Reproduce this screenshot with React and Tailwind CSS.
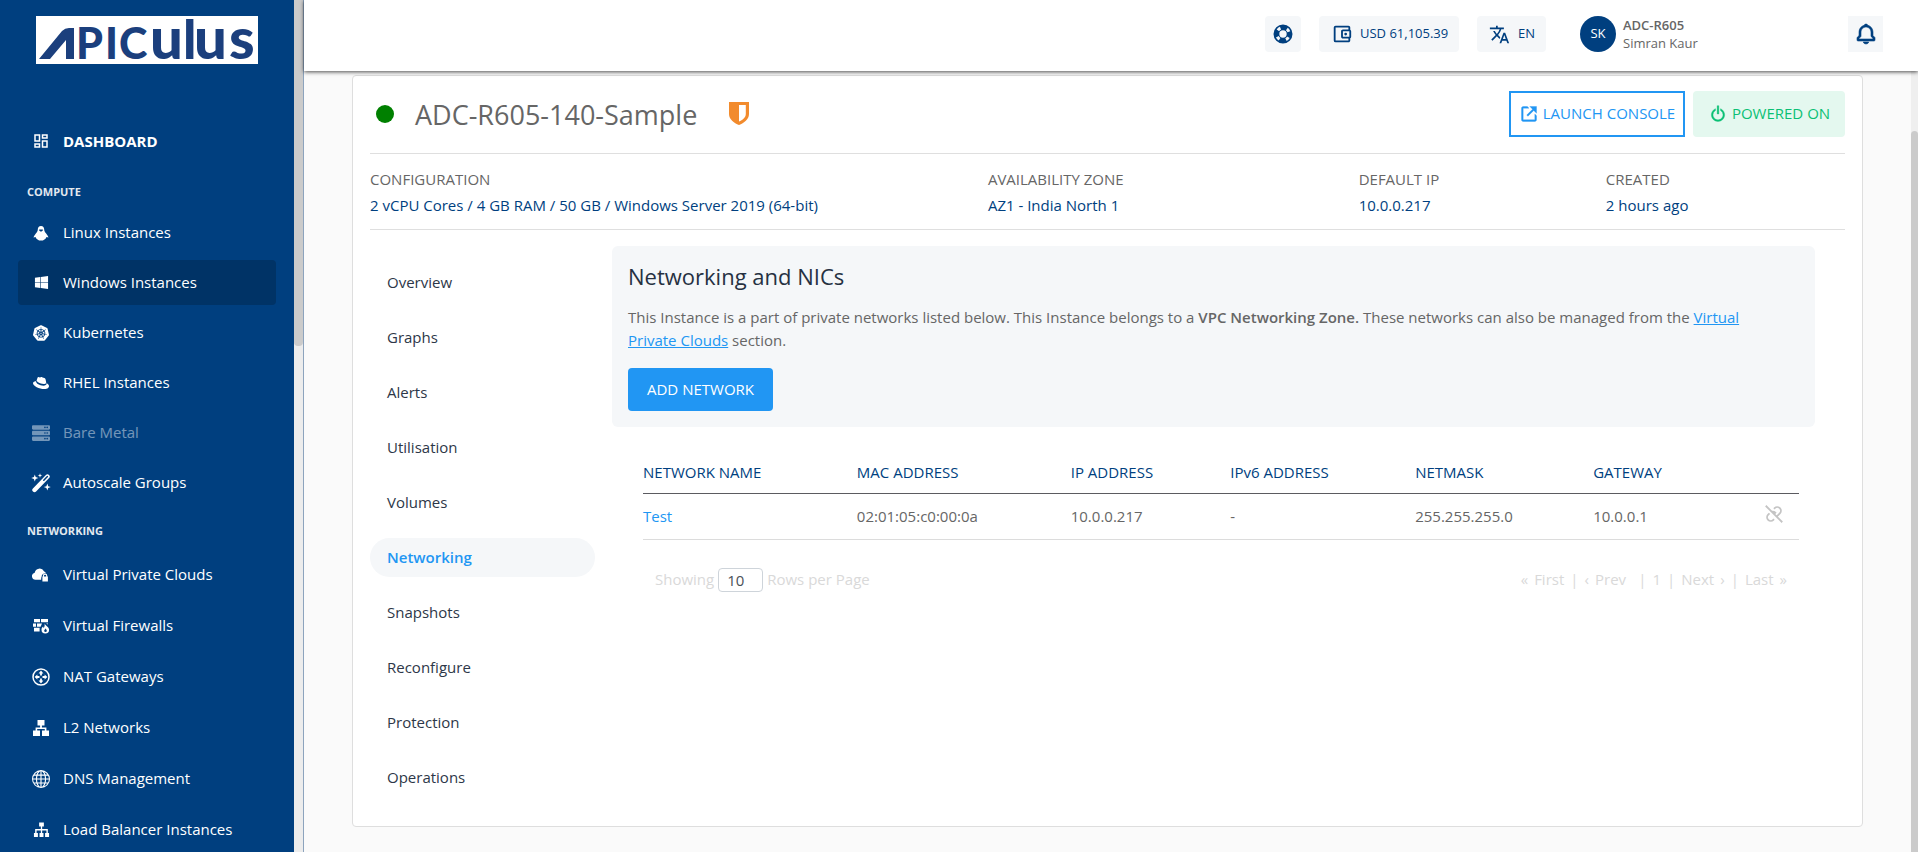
import { MdOutlineDashboard, MdTranslate, MdOutlineAccountBalanceWallet } from "react-icons/md";
import { FaRedhat, FaServer, FaWindows } from "react-icons/fa";
import { SiKubernetes } from "react-icons/si";
import { BsGlobe } from "react-icons/bs";
import { BiBell, BiLinkExternal, BiPowerOff, BiUnlink } from "react-icons/bi";

function Logo() {
  return (
    <svg viewBox="0 0 222 48" className="block h-12 w-[222px] overflow-visible bg-white" role="img" aria-label="Apiculus">
      <path d="M3 43 L26 15 Q29 12 33 12 H38 V43 H30 V24 L14 43 Z" fill="#1b3f7d" />
      <g fill="#1b3f7d" fontFamily="Lato, sans-serif">
        <text y="43" fontSize="43" fontWeight="900">
          <tspan x="40">P</tspan>
          <tspan x="69">I</tspan>
          <tspan x="83">C</tspan>
        </text>
        <text y="43" fontSize="58" fontWeight="900">
          <tspan x="114">u</tspan>
          <tspan x="158">u</tspan>
          <tspan x="193">s</tspan>
        </text>
        <text x="147" y="43" fontSize="53" fontWeight="900">l</text>
      </g>
    </svg>
  );
}

function LifebuoyIcon() {
  return (
    <svg viewBox="0 0 20 20" width="20" height="20" aria-hidden="true">
      <circle cx="10" cy="10" r="6.600" fill="none" stroke="currentColor" strokeWidth="5.800" />
      <circle
        cx="10"
        cy="10"
        r="6.300"
        fill="none"
        stroke="#f5f7f9"
        strokeWidth="3"
        strokeDasharray="3.200 6.696"
        strokeDashoffset="-3.348"
      />
    </svg>
  );
}

function PenguinIcon() {
  return (
    <svg viewBox="0 0 18 18" width="16" height="18" fill="currentColor" aria-hidden="true">
      <path fillRule="evenodd" d="M9 1C6.600 1 5.400 2.700 5.400 5c0 1.800-.9 2.800-2 4.300C2 11.200 1 12.500.6 14l2.200-.6C3.600 15.800 6 17.500 9 17.500s5.400-1.700 6.200-4.100l2.200.6c-.4-1.500-1.400-2.800-2.800-4.700-1.100-1.500-2-2.500-2-4.300 0-2.300-1.200-4-3.600-4ZM6.900 5.200h4.200v1L9 7.600 6.900 6.200Z" />
    </svg>
  );
}

function WandIcon() {
  return (
    <svg viewBox="0 0 20 20" width="20" height="20" fill="currentColor" aria-hidden="true" className="shrink-0">
      <path d="M3.500 17 16.500 3.500" stroke="currentColor" strokeWidth="4.400" strokeLinecap="round" />
      <path d="M12.800 7.300 16.400 3.600" stroke="#003f7f" strokeWidth="1.500" strokeLinecap="round" />
      <path d="M3.800 1.500l.9 2.600 2.600.9-2.600.9-.9 2.600-.9-2.600L.3 5l2.600-.9ZM9 .2l.6 1.700 1.700.6-1.700.6L9 4.800l-.6-1.700-1.700-.6 1.700-.6ZM16.300 10.600l.9 2.600 2.600.9-2.600.9-.9 2.600-.9-2.600-2.600-.9 2.600-.9Z" />
    </svg>
  );
}

function CloudLockIcon() {
  return (
    <svg viewBox="0 0 18 18" width="18" height="18" fill="currentColor" aria-hidden="true">
      <path d="M9.200 13.800H3.600A3.600 3.600 0 0 1 2.700 6.700 5 5 0 0 1 12 5.200c.6.600 1.600 1 2.200 2.200-2.500-.4-4.600 1-4.600 3.400-.4.700-.5 1.600-.4 3Z" />
      <path fillRule="evenodd" d="M10.400 10.600h.5V9.800a2.200 2.200 0 0 1 4.400 0v.8h.6v4.900h-5.500Zm1.600 0h2.200v-.8a1.100 1.100 0 0 0-2.200 0Z" />
    </svg>
  );
}

function FirewallIcon() {
  return (
    <svg viewBox="0 0 18 18" width="18" height="18" fill="currentColor" aria-hidden="true">
      <path d="M2 2h6v3.300H2ZM9 2h7v3.300H9ZM1 6.400h3v3.300H1ZM5 6.400h5L8.600 9.700H5ZM2 10.800h5.600v3.700H2ZM14 6.400h2v1.200Z" />
      <path fillRule="evenodd" d="M12.600 6.200c.2 2 4.500 3.600 4.500 6.600a3.800 3.800 0 0 1-7.600 0c0-1.600.8-2.600 1.700-3.200 0 .8.200 1.200.6 1.500.8-1.300 1-3 .8-4.900Zm.8 5c.2 1-1.200 1.500-1.200 2.500a1.300 1.300 0 0 0 2.600 0c0-1-.8-1.500-1.400-2.500Z" />
    </svg>
  );
}

function NatIcon() {
  return (
    <svg viewBox="0 0 18 18" width="18" height="18" fill="currentColor" aria-hidden="true">
      <circle cx="9" cy="9" r="8" fill="none" stroke="currentColor" strokeWidth="1.500" />
      <path d="M9 2.600 11.400 5.400H9.900V7.500H8.100V5.400H6.600ZM9 15.400 6.600 12.600H8.100V10.500H9.900V12.600H11.400ZM2.600 9 5.400 6.600V8.100H7.500V9.900H5.400V11.400ZM15.400 9 12.600 11.400V9.900H10.500V8.100H12.600V6.600Z" />
    </svg>
  );
}

function L2Icon() {
  return (
    <svg viewBox="0 0 18 18" width="18" height="18" fill="currentColor" aria-hidden="true">
      <path d="M5.500 1h7v5.500h-2.600v2h4.500v3H17V17h-7v-5.500h2.800V10H5.200v1.500H8V17H1v-5.500h2.600v-3h4.500v-2H5.500Z" />
    </svg>
  );
}

function BalancerIcon() {
  return (
    <svg viewBox="0 0 18 18" width="17" height="17" fill="currentColor" aria-hidden="true">
      <path d="M6.500 1.500h5v4.200H9.700v2.900h6v4h1.300V17h-4.200v-4.400h1.400V10H9.700v2.600h1.400V17H6.900v-4.400h1.400V10H3.800v2.600h1.400V17H1v-4.400h1.300v-4h6V5.700H6.500Z" />
    </svg>
  );
}

function ShieldIcon() {
  return (
    <svg viewBox="0 0 20 23" width="20" height="23" aria-label="Protected" role="img">
      <path fillRule="evenodd" fill="#f28b2d" d="M0 0h20v12c0 5.500-5 9-10 11C5 21 0 17.500 0 12ZM10 3v16.600c3.500-1.500 6.800-4 6.800-7.600V3Z" />
    </svg>
  );
}

const compute = [
  { label: "Linux Instances", icon: <PenguinIcon /> },
  { label: "Windows Instances", icon: <FaWindows size={15} />, active: true },
  { label: "Kubernetes", icon: <SiKubernetes size={16} /> },
  { label: "RHEL Instances", icon: <FaRedhat size={16} /> },
  { label: "Bare Metal", icon: <FaServer size={18} />, disabled: true },
  { label: "Autoscale Groups", icon: <WandIcon /> },
];

const networking = [
  { label: "Virtual Private Clouds", icon: <CloudLockIcon /> },
  { label: "Virtual Firewalls", icon: <FirewallIcon /> },
  { label: "NAT Gateways", icon: <NatIcon /> },
  { label: "L2 Networks", icon: <L2Icon /> },
  { label: "DNS Management", icon: <BsGlobe size={18} /> },
  { label: "Load Balancer Instances", icon: <BalancerIcon /> },
];

const details = [
  { label: "CONFIGURATION", value: "2 vCPU Cores / 4 GB RAM / 50 GB / Windows Server 2019 (64-bit)", span: "col-span-5" },
  { label: "AVAILABILITY ZONE", value: "AZ1 - India North 1", span: "col-span-3" },
  { label: "DEFAULT IP", value: "10.0.0.217", span: "col-span-2" },
  { label: "CREATED", value: "2 hours ago", span: "col-span-2" },
];

const tabs = [
  "Overview",
  "Graphs",
  "Alerts",
  "Utilisation",
  "Volumes",
  "Networking",
  "Snapshots",
  "Reconfigure",
  "Protection",
  "Operations",
];

function NavItem({ label, icon, active, disabled }) {
  return (
    <a
      href="#"
      aria-disabled={disabled}
      className={`flex h-[45px] items-center gap-[13px] rounded pl-3.5 whitespace-nowrap ${active ? "bg-[#003366]" : ""} ${disabled ? "opacity-45" : ""}`}
    >
      <span className="flex w-[18px] shrink-0 justify-center">{icon}</span>
      {label}
    </a>
  );
}

function Sidebar() {
  return (
    <div className="flex w-[304px] shrink-0 overflow-hidden border-r border-[#8ca3bd] bg-[#003f7f]">
      <aside className="min-w-0 flex-1 px-[18px] pt-4 text-[15px] text-white">
        <div className="pl-[18px]">
          <Logo />
        </div>
        <nav>
          <a href="#" className="mt-[54px] flex h-[46px] items-center gap-[13px] pl-3.5 font-bold">
            <span className="flex w-[18px] justify-center">
              <MdOutlineDashboard size={18} />
            </span>
            DASHBOARD
          </a>
          <h2 className="flex h-[46px] items-center pt-2.5 pl-[9px] text-[11px] font-bold text-[#e3e9ef]">COMPUTE</h2>
          <div className="flex flex-col gap-[5px]">
            {compute.map((item) => (
              <NavItem key={item.label} {...item} />
            ))}
          </div>
          <h2 className="flex h-[47px] items-center pt-1.5 pl-[9px] text-[11px] font-bold text-[#e3e9ef]">NETWORKING</h2>
          <div className="flex flex-col gap-1.5">
            {networking.map((item) => (
              <NavItem key={item.label} {...item} />
            ))}
          </div>
        </nav>
      </aside>
      <div className="w-[9px] shrink-0 bg-[#ececec]" aria-hidden="true">
        <div className="h-[346px] rounded-b bg-[#cbcbcb]" />
      </div>
    </div>
  );
}

function Header() {
  return (
    <header className="z-10 flex h-[71px] shrink-0 items-start justify-end bg-white pt-4 pr-[35px] text-[13px] text-[#003f7f] shadow-[0_1px_4px_rgba(0,0,0,0.7)]">
      <button aria-label="Support" className="flex h-9 w-9 items-center justify-center rounded bg-[#f5f7f9]">
        <LifebuoyIcon />
      </button>
      <button className="ml-[18px] flex h-9 w-[140px] items-center gap-[7px] rounded bg-[#f5f7f9] pl-3">
        <MdOutlineAccountBalanceWallet size={22} />
        USD 61,105.39
      </button>
      <button className="ml-[18px] flex h-9 w-[69px] items-center gap-2 rounded bg-[#f5f7f9] pl-3">
        <MdTranslate size={21} />
        EN
      </button>
      <div className="ml-[34px] flex w-[268px] items-center gap-[7px]">
        <span className="flex h-9 w-9 items-center justify-center rounded-full bg-[#003f7f] text-[13px] font-medium text-white">SK</span>
        <div className="leading-[18px] text-[#666]">
          <div className="font-semibold">ADC-R605</div>
          <div>Simran Kaur</div>
        </div>
      </div>
      <button aria-label="Notifications" className="flex h-9 w-[35px] items-center justify-center bg-[#f5f7f9]">
        <BiBell size={24} stroke="currentColor" strokeWidth={0.6} />
      </button>
    </header>
  );
}

function NetworkTable() {
  return (
    <div className="mt-6 mr-4 ml-[31px]">
      <table className="w-full table-fixed text-left">
        <thead>
          <tr className="border-b border-[#5b5b60] text-[#003f7f]">
            <th className="h-[42px] w-[18.5%] font-normal">NETWORK NAME</th>
            <th className="w-[18.5%] font-normal">MAC ADDRESS</th>
            <th className="w-[13.8%] font-normal">IP ADDRESS</th>
            <th className="w-[16%] font-normal">IPv6 ADDRESS</th>
            <th className="w-[15.4%] font-normal">NETMASK</th>
            <th className="font-normal">GATEWAY</th>
            <th className="w-[5%]" aria-label="Actions" />
          </tr>
        </thead>
        <tbody>
          <tr className="border-b border-[#dcdcdc]">
            <td className="h-[46px]">
              <a href="#" className="text-[#2196f3]">Test</a>
            </td>
            <td>02:01:05:c0:00:0a</td>
            <td>10.0.0.217</td>
            <td>-</td>
            <td>255.255.255.0</td>
            <td>10.0.0.1</td>
            <td>
              <button aria-label="Detach network" className="mr-3.5 mb-1 ml-auto flex text-[#c4c4c4]">
                <BiUnlink size={22} />
              </button>
            </td>
          </tr>
        </tbody>
      </table>
      <div className="mt-7 flex items-center justify-between px-3 text-[#d9d9d9]">
        <label className="flex items-center gap-1">
          Showing
          <input
            type="text"
            defaultValue="10"
            className="h-6 w-[45px] rounded border border-[#ced4da] bg-white pl-2 text-[#495057]"
          />
          Rows per Page
        </label>
        <div className="flex items-center gap-1.5">
          <button className="flex gap-1.5">
            <span>«</span>
            <span>First</span>
          </button>
          <span>|</span>
          <button className="flex gap-1.5">
            <span>‹</span>
            <span>Prev</span>
          </button>
          <span className="ml-1.5">|</span>
          <span>1</span>
          <span>|</span>
          <button className="flex gap-1.5">
            <span>Next</span>
            <span>›</span>
          </button>
          <span>|</span>
          <button className="flex gap-1.5">
            <span>Last</span>
            <span>»</span>
          </button>
        </div>
      </div>
    </div>
  );
}

function InstanceCard() {
  return (
    <main className="mx-12 mt-1 rounded border border-[#dedede] bg-white px-[17px] pb-[29px] text-[15px] text-[#666]">
      <div className="flex h-[78px] items-center border-b border-[#dfdfdf] pb-0.5">
        <span className="ml-1.5 h-[18px] w-[18px] rounded-full bg-[#008000]" />
        <h1 className="mr-8 ml-[21px] pt-1 text-[27px]">ADC-R605-140-Sample</h1>
        <ShieldIcon />
        <button className="ml-auto flex h-[46px] w-44 items-center justify-center gap-1 border-2 border-[#2196f3] text-[#2196f3]">
          <BiLinkExternal size={20} stroke="currentColor" strokeWidth={0.4} />
          LAUNCH CONSOLE
        </button>
        <button className="ml-2 flex h-[46px] w-[152px] items-center justify-center gap-1 rounded bg-[#e4f8ef] text-[#0ac074]">
          <BiPowerOff size={20} stroke="currentColor" strokeWidth={0.4} />
          POWERED ON
        </button>
      </div>
      <dl className="grid grid-cols-12 gap-2 border-b border-[#dfdfdf] pt-3 pb-[11px] leading-[26px]">
        {details.map(({ label, value, span }) => (
          <div key={label} className={span}>
            <dt>{label}</dt>
            <dd className="text-[#003f7f]">{value}</dd>
          </div>
        ))}
      </dl>
      <div className="flex gap-[17px] pt-4 pr-[30px]">
        <nav className="flex w-[225px] shrink-0 flex-col gap-4 pt-[17px]">
          {tabs.map((tab) => (
            <a
              key={tab}
              href="#"
              className={`flex h-[39px] items-center rounded-full pl-[17px] ${tab === "Networking" ? "bg-[#f5f7f9] font-semibold text-[#2196f3]" : "text-[#2d3748]"}`}
            >
              {tab}
            </a>
          ))}
        </nav>
        <section className="min-w-0 flex-1">
          <div className="rounded-md bg-[#f5f7f9] p-4">
            <h2 className="mb-4 text-[22px] leading-7 text-[#263142]">Networking and NICs</h2>
            <p className="pr-8 leading-[23px]">
              This Instance is a part of private networks listed below. This Instance belongs to a{" "}
              <strong className="font-semibold">VPC Networking Zone.</strong> These networks can also be managed from the{" "}
              <a href="#" className="text-[#2196f3] underline">Virtual Private Clouds</a> section.
            </p>
            <button className="mt-4 h-[43px] w-[145px] rounded bg-[#2196f3] text-white">ADD NETWORK</button>
          </div>
          <NetworkTable />
        </section>
      </div>
    </main>
  );
}

export default function App() {
  return (
    <div className="flex h-screen overflow-hidden bg-[#fafafa] font-['Open_Sans','Noto_Sans',sans-serif]">
      <Sidebar />
      <div className="flex min-w-0 flex-1 flex-col">
        <Header />
        <div className="flex min-h-0 flex-1">
          <div className="min-w-0 flex-1">
            <InstanceCard />
          </div>
          <div className="w-[7px] shrink-0 bg-[#efefef] pt-[60px]" aria-hidden="true">
            <div className="h-full rounded-t bg-[#cbcbcb]" />
          </div>
        </div>
      </div>
    </div>
  );
}
